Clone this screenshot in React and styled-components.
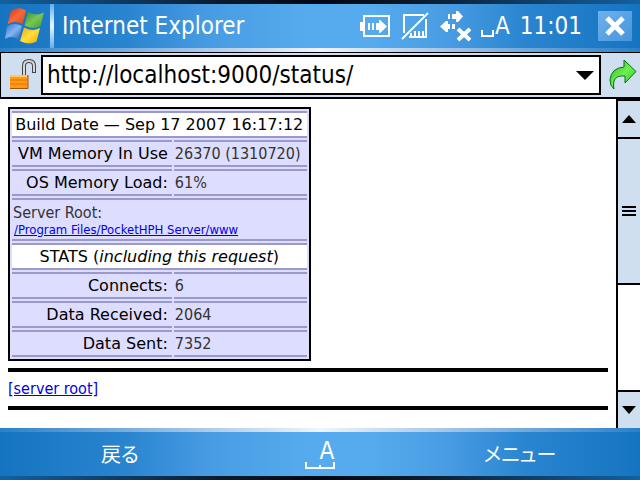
import React, { useState } from "react";
import styled, { createGlobalStyle } from "styled-components";

const uiFont = `"DejaVu Sans Condensed", "Noto Sans", "Noto Sans CJK JP", sans-serif`;
const pageFont = `"DejaVu Sans Condensed", "Noto Sans", sans-serif`;
const wideFont = `"DejaVu Sans", sans-serif`;
const barBlue = `linear-gradient(to right, #1574c0 0%, #2a85d0 20%, #489ce3 33%, #56abee 48%, #56abee 58%, #489ce3 70%, #2a85d0 82%, #1574c0 100%)`;
const panel = "#cfdfef";

const GlobalStyle = createGlobalStyle`
    * {
        box-sizing: border-box;
    }
    body {
        margin: 0;
        background: #fff;
    }
    button {
        border: 0;
        padding: 0;
        margin: 0;
        background: none;
        color: inherit;
        font: inherit;
    }
`;

const Screen = styled.div`
    display: flex;
    flex-direction: column;
    height: 100vh;
    font-family: ${uiFont};
    color: #000;
`;

const Edge = styled.div`
    flex: none;
    height: 4px;
    background: ${({ $dark }) =>
        $dark
            ? "linear-gradient(to right, #14609f, #0b1a2c 35%, #000814 50%, #0b1a2c 65%, #14609f)"
            : "linear-gradient(to right, #2a80c8, #8fb9e2 25%, #f0f4fc 50%, #8fb9e2 75%, #2a80c8)"};
`;

const TitleBar = styled.header`
    flex: none;
    display: flex;
    align-items: center;
    height: 44px;
    padding-right: 8px;
    background: ${barBlue};
    color: #fff;
`;

const StartButton = styled.button`
    display: flex;
    justify-content: center;
    width: 50px;
`;

const Divider = styled.span`
    align-self: stretch;
    width: 4px;
    background: linear-gradient(#5fb0ee, #e8f5ff 50%, #5fb0ee);
`;

const Title = styled.h1`
    flex: 1;
    margin: 0;
    padding-left: 8px;
    font-size: 24px;
    font-weight: 400;
    line-height: 32px;
    white-space: nowrap;
`;

const Tray = styled.div`
    display: flex;
    align-items: center;
    gap: 10px;
`;

const InputMode = styled.span`
    display: flex;
    align-items: center;
    gap: 1px;
    font-size: 24px;
    line-height: 32px;
`;

const Clock = styled.time`
    font-size: 24px;
    line-height: 32px;
`;

const CloseButton = styled.button`
    display: flex;
    align-items: center;
    justify-content: center;
    width: 34px;
    height: 30px;
    margin-left: 6px;
    background: linear-gradient(135deg, #6eb2ec, #4595dc);
`;

const AddressBar = styled.form`
    flex: none;
    display: flex;
    align-items: center;
    height: 47px;
    padding: 1px 0;
    margin: 0;
    background: ${panel};
    border: solid #000;
    border-width: 1px 0 2px 1px;
`;

const LockSlot = styled.span`
    display: flex;
    justify-content: center;
    width: 40px;
    padding-left: 4px;
`;

const ComboBox = styled.div`
    flex: 1;
    display: flex;
    align-items: stretch;
    height: 40px;
    border: 2px solid #000;
    background: #fff;
`;

const AddressInput = styled.input`
    flex: 1;
    min-width: 0;
    border: 0;
    outline: 0;
    padding: 0 4px;
    background: transparent;
    color: #000;
    font-family: ${uiFont};
    font-size: 24px;
`;

const DropButton = styled.button`
    display: flex;
    align-items: center;
    justify-content: center;
    width: 28px;
`;

const GoButton = styled.button`
    display: flex;
    justify-content: center;
    width: 39px;
    padding-left: 4px;
`;

const View = styled.div`
    flex: 1;
    display: flex;
    min-height: 0;
`;

const Page = styled.main`
    flex: 1;
    min-width: 0;
    overflow: hidden;
    padding: 8px;
    background: #fff;
    font-family: ${pageFont};
    font-size: 16px;
    line-height: 21px;
`;

const StatusTable = styled.table`
    border: 2px solid #000;
    border-spacing: 2px;
    background: #ddddff;
    color: #333;
`;

const Cell = styled.td`
    padding: 1px 6px 1px 1px;
    border: solid #9999cc;
    border-width: 2px 0;
    text-align: left;
    white-space: nowrap;
`;

const Label = styled(Cell).attrs({ as: "th", scope: "row" })`
    padding: 1px 4px 1px 6px;
    color: #000;
    font-family: ${wideFont};
    font-weight: 400;
    text-align: right;
`;

const Heading = styled(Cell).attrs({ as: "th", colSpan: 2 })`
    padding: 1px;
    background: #fff;
    color: #000;
    font-family: ${wideFont};
    font-weight: 400;
    text-align: center;
`;

const RootCell = styled(Cell)`
    padding-top: 3px;
    line-height: 19px;
`;

const Link = styled.a`
    color: #0000ee;
`;

const PathLink = styled(Link)`
    display: block;
    padding-left: 1px;
    font-size: 13px;
    line-height: 16px;
`;

const Rule = styled.hr`
    height: 4px;
    margin: 7px 0 6px;
    border: 0;
    background: #000;
`;

const LinkLine = styled.p`
    margin: 0;
`;

const ScrollBar = styled.div`
    flex: none;
    display: flex;
    flex-direction: column;
    width: 24px;
    border-left: 2px solid #000;
    background: #fff;
`;

const ScrollButton = styled.button`
    display: flex;
    align-items: center;
    justify-content: center;
    height: ${({ $down }) => ($down ? 38 : 40)}px;
    background: ${panel};
    border: solid #000;
    border-width: ${({ $down }) => ($down ? "2px 0 0" : "2px 0")};
`;

const Track = styled.div`
    flex: 1;
`;

const Thumb = styled.div`
    display: flex;
    flex-direction: column;
    align-items: center;
    justify-content: center;
    gap: 2px;
    height: 58%;
    border-bottom: 2px solid #000;
    background: ${panel};
`;

const Grip = styled.span`
    width: 14px;
    height: 2px;
    background: #000;
`;

const MenuBar = styled.footer`
    flex: none;
    display: grid;
    grid-template-columns: 3fr 2fr 3fr;
    align-items: center;
    height: 44px;
    background: ${barBlue};
    color: #fff;
`;

const SoftKey = styled.button`
    font-family: "Noto Sans CJK JP", sans-serif;
    font-size: 20px;
    font-feature-settings: "palt";
    line-height: 44px;
`;

const KeyboardButton = styled.button`
    display: flex;
    flex-direction: column;
    align-items: center;
    font-size: 24px;
    line-height: 24px;
`;

const KeyLetter = styled.span`
    padding-left: 14px;
    height: 22px;
`;

const WindowsLogo = () => (
    <svg width="40" height="37" viewBox="0 0 40 37" aria-hidden="true">
        <defs>
            <linearGradient id="red" x1="0" y1="0" x2="1" y2="1">
                <stop offset="0" stopColor="#c93618" />
                <stop offset="0.5" stopColor="#f9683a" />
                <stop offset="1" stopColor="#e04418" />
            </linearGradient>
            <linearGradient id="green" x1="0" y1="0" x2="1" y2="1">
                <stop offset="0" stopColor="#2c9427" />
                <stop offset="0.5" stopColor="#7cc653" />
                <stop offset="1" stopColor="#3a9e30" />
            </linearGradient>
            <linearGradient id="blue" x1="0" y1="0" x2="1" y2="1">
                <stop offset="0" stopColor="#3a74cc" />
                <stop offset="0.5" stopColor="#7fb6f2" />
                <stop offset="1" stopColor="#2156b0" />
            </linearGradient>
            <linearGradient id="yellow" x1="0" y1="0" x2="1" y2="1">
                <stop offset="0" stopColor="#f0a810" />
                <stop offset="0.5" stopColor="#ffdf3c" />
                <stop offset="1" stopColor="#e8a80c" />
            </linearGradient>
        </defs>
        <path d="M6 3 Q13 -2 21 2.500 L17.500 16 Q9.500 12 2.500 16.500 Z" fill="url(#red)" />
        <path d="M23 4 Q31 8.500 39 4.500 L35.500 18 Q27.500 22 19.500 17.500 Z" fill="url(#green)" />
        <path d="M2 18.500 Q9 14 17 18 L13.500 31.500 Q6 27 0 31 Z" fill="url(#blue)" />
        <path d="M19 19.500 Q27 24 35 20 L31.500 33.500 Q23.500 37.500 15 33 Z" fill="url(#yellow)" />
    </svg>
);

const BatteryIcon = () => (
    <svg width="31" height="24" viewBox="0 0 31 24" aria-hidden="true">
        <rect x="4" y="2" width="25" height="20" fill="none" stroke="#fff" strokeWidth="2" />
        <path d="M0 8h3v9H0zM8 9h2v7H8zM12 9h2v7h-2zM16 9h3V6h1l7 6.500-7 6.500h-1v-3h-3z" fill="#fff" />
    </svg>
);

const NoSignalIcon = () => (
    <svg width="29" height="30" viewBox="0 0 29 30" aria-hidden="true">
        <path d="M3 22V4h20M8 26h17V8M3 4v5" fill="none" stroke="#fff" strokeWidth="2" />
        <path d="M1 28L27 2" stroke="#fff" strokeWidth="2" />
        <path d="M9 22h2v4H9zM13 20h2v6h-2zM17 20h2v6h-2zM21 20h2v6h-2z" fill="#fff" />
    </svg>
);

const NoNetworkIcon = () => (
    <svg width="31" height="32" viewBox="0 0 31 32" aria-hidden="true">
        <path d="M8 4h2v5H8zM12 4h4V1h2l5 5.500-5 5.500h-2V9h-4z" fill="#fff" />
        <path d="M0 16.500L6 11h2v3h2v5H8v3H6zM12 14h3v5h-3z" fill="#fff" />
        <path d="M18 19l12 11M30 19L18 30" stroke="#fff" strokeWidth="4" />
    </svg>
);

const LockIcon = () => (
    <svg width="28" height="32" viewBox="0 0 28 32" aria-hidden="true">
        <path d="M15 16V7q0-5 5-5t5 5v7" fill="none" stroke="#444" strokeWidth="4" />
        <path d="M15 16V7q0-5 5-5t5 5v6" fill="none" stroke="#d8d8d8" strokeWidth="2" />
        <rect x="1" y="16" width="18" height="14" fill="#ff9a18" />
        <path d="M1 16h17v2H1z" fill="#ffc860" />
        <path d="M1 21h17M1 25h17" stroke="#f0860c" strokeWidth="2" />
        <path d="M1 29.500h18V16" fill="none" stroke="#a85400" />
    </svg>
);

const GoIcon = () => (
    <svg width="28" height="32" viewBox="0 0 28 32" aria-hidden="true">
        <defs>
            <linearGradient id="go" x1="0" y1="0" x2="1" y2="1">
                <stop offset="0" stopColor="#2fae2c" />
                <stop offset="0.5" stopColor="#6cf04e" />
                <stop offset="1" stopColor="#1fc41f" />
            </linearGradient>
        </defs>
        <path
            d="M15 1L27 12.500 16 24V17Q7 16 5 22 4 26 5 30 1 27 1 21 2 9 15 8Z"
            fill="url(#go)"
            stroke="#0b6f16"
        />
    </svg>
);

const Arrow = ({ width, height, down }) => (
    <svg width={width} height={height} viewBox="0 0 16 8" preserveAspectRatio="none" aria-hidden="true">
        <path d={down ? "M0 0h16L8 8z" : "M0 8h16L8 0z"} fill="#000" />
    </svg>
);

const memory = [
    ["VM Memory In Use", "26370 (1310720)"],
    ["OS Memory Load:", "61%"],
];

const stats = [
    ["Connects:", "6"],
    ["Data Received:", "2064"],
    ["Data Sent:", "7352"],
];

const Rows = ({ items }) =>
    items.map(([label, value]) => (
        <tr key={label}>
            <Label>{label}</Label>
            <Cell>{value}</Cell>
        </tr>
    ));

const App = () => {
    const [url, setUrl] = useState("http://localhost:9000/status/");

    return (
        <Screen>
            <GlobalStyle />
            <Edge $dark />
            <TitleBar>
                <StartButton aria-label="Start">
                    <WindowsLogo />
                </StartButton>
                <Divider />
                <Title>Internet Explorer</Title>
                <Tray>
                    <BatteryIcon />
                    <NoSignalIcon />
                    <NoNetworkIcon />
                    <InputMode>
                        <svg width="13" height="22" viewBox="0 0 13 22" aria-hidden="true">
                            <path d="M1 15v6h11v-6" fill="none" stroke="#fff" strokeWidth="2" />
                        </svg>
                        A
                    </InputMode>
                    <Clock>11:01</Clock>
                    <CloseButton aria-label="Close">
                        <svg width="20" height="20" viewBox="0 0 20 20" aria-hidden="true">
                            <path d="M2 2l16 16M18 2L2 18" stroke="#fff" strokeWidth="5" />
                        </svg>
                    </CloseButton>
                </Tray>
            </TitleBar>
            <Edge />
            <AddressBar onSubmit={(e) => e.preventDefault()}>
                <LockSlot>
                    <LockIcon />
                </LockSlot>
                <ComboBox>
                    <AddressInput
                        aria-label="Address"
                        spellCheck={false}
                        value={url}
                        onChange={(e) => setUrl(e.target.value)}
                    />
                    <DropButton type="button" aria-label="Show addresses">
                        <Arrow width={18} height={9} down />
                    </DropButton>
                </ComboBox>
                <GoButton type="submit" aria-label="Go">
                    <GoIcon />
                </GoButton>
            </AddressBar>
            <View>
                <Page>
                    <StatusTable>
                        <tbody>
                            <tr>
                                <Heading>Build Date — Sep 17 2007 16:17:12</Heading>
                            </tr>
                            <Rows items={memory} />
                            <tr>
                                <RootCell colSpan={2}>
                                    Server Root:
                                    <PathLink href="#root">/Program Files/PocketHPH Server/www</PathLink>
                                </RootCell>
                            </tr>
                            <tr>
                                <Heading>
                                    STATS (<em>including this request</em>)
                                </Heading>
                            </tr>
                            <Rows items={stats} />
                        </tbody>
                    </StatusTable>
                    <Rule />
                    <LinkLine>
                        <Link href="#server">[server root]</Link>
                    </LinkLine>
                    <Rule />
                </Page>
                <ScrollBar>
                    <ScrollButton aria-label="Scroll up">
                        <Arrow width={14} height={8} />
                    </ScrollButton>
                    <Track>
                        <Thumb>
                            <Grip />
                            <Grip />
                            <Grip />
                        </Thumb>
                    </Track>
                    <ScrollButton $down aria-label="Scroll down">
                        <Arrow width={14} height={8} down />
                    </ScrollButton>
                </ScrollBar>
            </View>
            <Edge />
            <MenuBar>
                <SoftKey>戻る</SoftKey>
                <KeyboardButton aria-label="Keyboard">
                    <KeyLetter>A</KeyLetter>
                    <svg width="30" height="8" viewBox="0 0 30 8" aria-hidden="true">
                        <path d="M1 1v6h28V1M15 7V4" fill="none" stroke="#fff" strokeWidth="2" />
                    </svg>
                </KeyboardButton>
                <SoftKey>メニュー</SoftKey>
            </MenuBar>
            <Edge $dark />
        </Screen>
    );
};

export default App;
